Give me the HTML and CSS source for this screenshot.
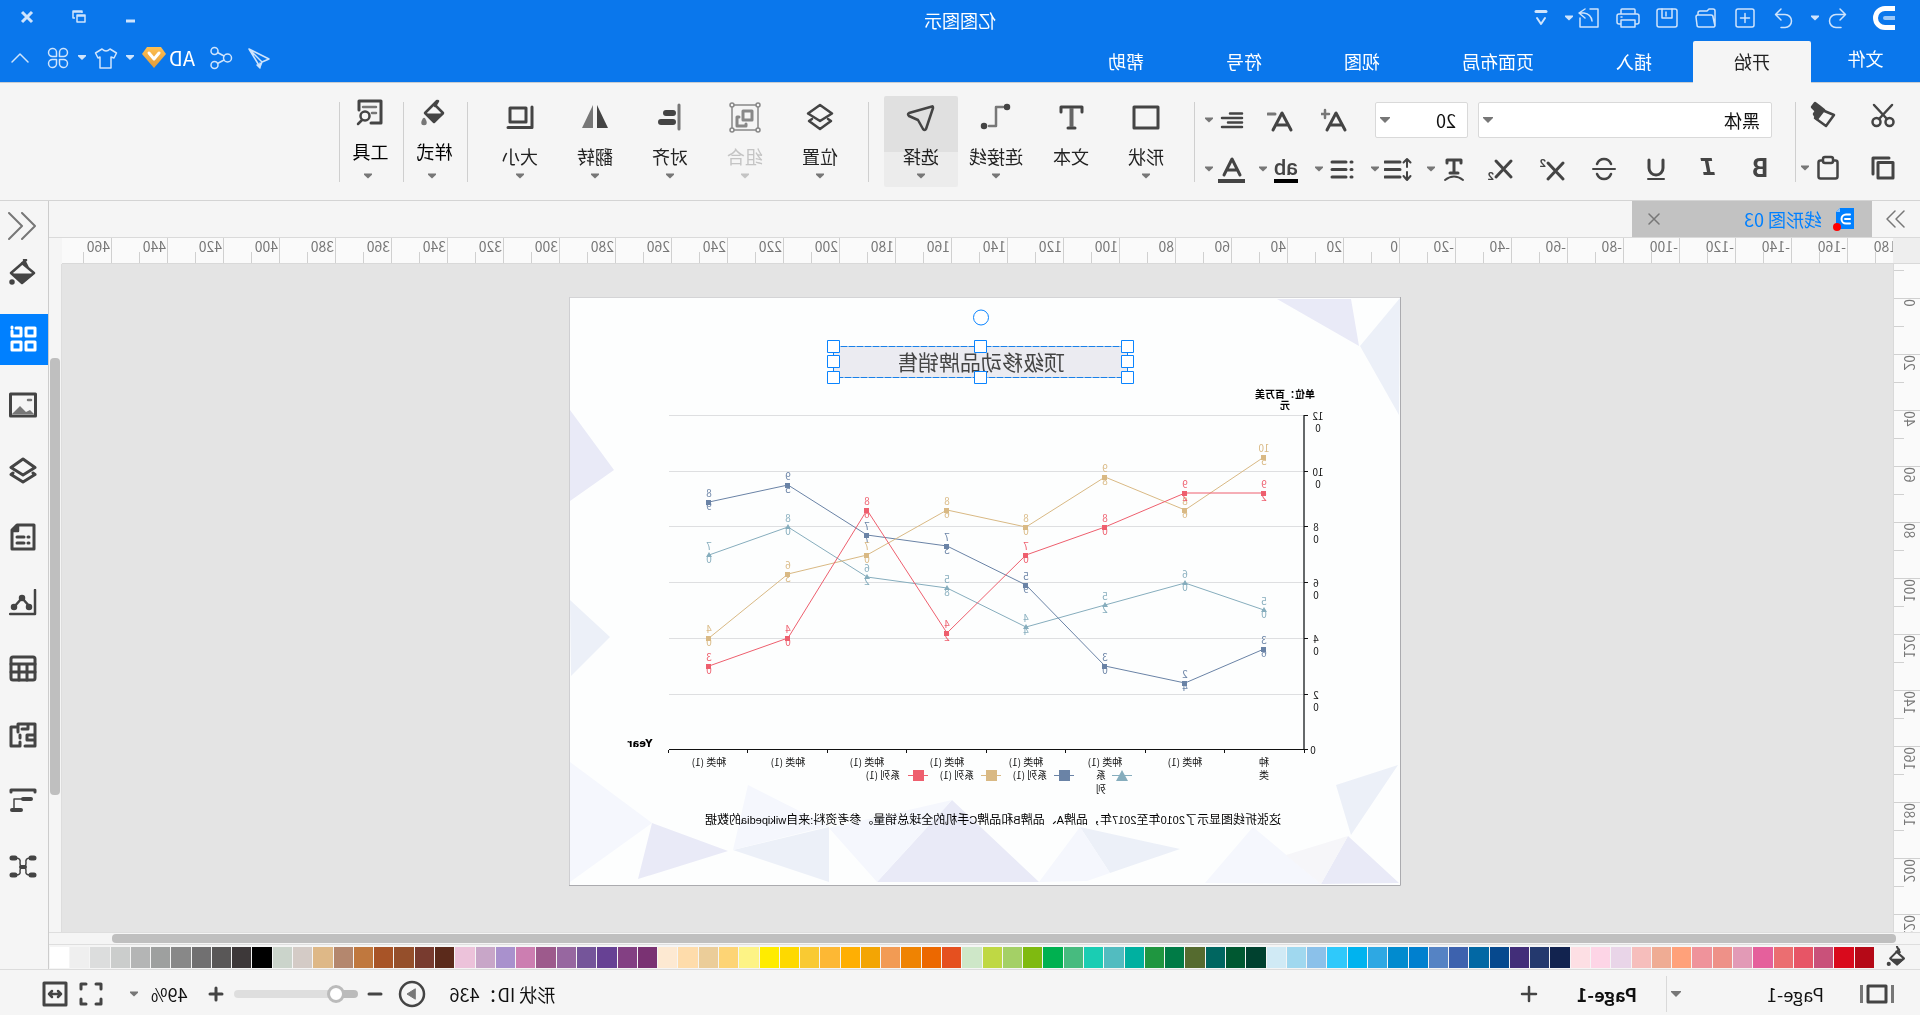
FILE: index.html
```html
<!DOCTYPE html>
<html lang="zh-CN">
<head>
<meta charset="utf-8">
<title>亿图图示</title>
<link rel="stylesheet" href="styles.css">
</head>
<body>
<div class="app">
  <header class="header">
    <div class="titlebar">
      <div class="quick">
        <svg class="logo" viewBox="0 0 22 24"><path d="M0 2.500H10a9.500 9.500 0 0 1 0 19H0" fill="none" stroke="#fff" stroke-width="5"/><path d="M0 12H10" stroke="#9cc8f7" stroke-width="4" stroke-linecap="round"/></svg>
        <button class="ib" aria-label="撤销"><svg viewBox="0 0 24 24"><path d="M9 3 3.500 8.500 9 14M4 8.500h9a6.500 6.500 0 0 1 0 13H8"/></svg></button>
        <button class="caret light" aria-label="撤销列表"></button>
        <button class="ib" aria-label="恢复"><svg viewBox="0 0 24 24"><path d="M15 3l5.500 5.500L15 14M20 8.500h-9a6.500 6.500 0 0 0 0 13h4"/></svg></button>
        <button class="ib" aria-label="新建"><svg viewBox="0 0 24 24"><rect x="3" y="3" width="18" height="18" rx="2"/><path d="M12 7.500v9M7.500 12h9"/></svg></button>
        <button class="ib" aria-label="打开"><svg viewBox="0 0 24 24"><path d="M3 20V5q0-2 2-2h4l2 2h7q2 0 2 2v2M3 20l1 1h15q2 0 2-2l1-8q0-2-2-2H7q-2 0-2 2z"/></svg></button>
        <button class="ib" aria-label="保存"><svg viewBox="0 0 24 24"><rect x="2" y="3" width="20" height="18" rx="2"/><path d="M7 3v9h10V3M13 6v4"/></svg></button>
        <button class="ib" aria-label="打印"><svg viewBox="0 0 24 24"><path d="M5 8V4q0-1 1-1h12q1 0 1 1v4M5 18H3q-2 0-2-2v-6q0-2 2-2h18q2 0 2 2v6q0 2-2 2h-2M5 14h14v7H5zM18 11h1"/></svg></button>
        <button class="ib" aria-label="导出"><svg viewBox="0 0 24 24"><path d="M11 3H3v18h18v-9M16 3l6 4-6 5M22 7h-5q-7 1-8 8"/></svg></button>
        <button class="caret light tight" aria-label="导出列表"></button>
        <button class="ib" aria-label="自定义"><svg viewBox="0 0 24 24"><path d="M7 5.500h10" stroke-width="3"/><path d="M8 12l4 6 4-6" stroke-width="2"/></svg></button>
      </div>
      <h1 class="title">亿图图示</h1>
      <div class="winctl">
        <button aria-label="最小化"><svg viewBox="0 0 16 16"><path d="M4 12h9" stroke-width="3"/></svg></button>
        <button aria-label="还原"><svg viewBox="0 0 16 16"><path d="M5 4V2h9v7h-2M2 6h8v7H2zM2 7h8M5 3h9" stroke-width="1.500"/></svg></button>
        <button aria-label="关闭"><svg viewBox="0 0 16 16"><path d="M3 3l10 10M13 3 3 13" stroke-width="3"/></svg></button>
      </div>
    </div>
    <div class="tabbar">
      <nav class="tabs">
        <a href="#file" class="file">文件</a><a href="#home" class="on">开始</a><a href="#insert">插入</a><a href="#layout">页面布局</a><a href="#view">视图</a><a href="#symbol">符号</a><a href="#help">帮助</a>
      </nav>
      <div class="tools">
        <button class="ib" aria-label="发送"><svg viewBox="0 0 24 24"><path d="M22 3 2 13l7 3 2 5 11-18zM22 3 9 16M11 17v5l3-3"/></svg></button>
        <button class="ib" aria-label="分享"><svg viewBox="0 0 24 24"><circle cx="5.500" cy="12" r="4"/><circle cx="18.500" cy="5" r="3.500"/><circle cx="18.500" cy="19" r="3.500"/><path d="M9 10l6.500-3.500M9 14l6.500 3.500"/></svg></button>
        <button class="account"><span>AD</span><svg viewBox="0 0 24 24"><defs><linearGradient id="gem" x2="0" y2="1"><stop offset="0" stop-color="#ffc052"/><stop offset="1" stop-color="#e09b3c"/></linearGradient></defs><path d="M5 1h14l5 7-12 14L0 8z" fill="url(#gem)" stroke="none"/><path d="M7 7l5 6 5-6" stroke="#fff" stroke-width="3"/></svg></button>
        <button class="caret light" aria-label="账号"></button>
        <button class="ib" aria-label="主题"><svg viewBox="0 0 24 24"><path d="M8 3 1.500 7 4 12l3-1v11h11V11l2 1 2.500-5L16 3q-4 4-8 0z"/></svg></button>
        <button class="caret light" aria-label="主题列表"></button>
        <button class="ib" aria-label="应用"><svg viewBox="0 0 24 24"><path d="M10.500 10.500V7a4 4 0 1 0-4.500 3.500zM13.500 10.500V7a4 4 0 1 1 4.500 3.500zM10.500 13.500V17a4 4 0 1 1-4.500-3.500zM13.500 13.500V17a4 4 0 1 0 4.500-3.500z"/></svg></button>
        <button class="ib" aria-label="收起"><svg viewBox="0 0 24 24"><path d="M4 16l8-8 8 8"/></svg></button>
      </div>
    </div>
  </header>

  <section class="ribbon">
    <div class="clip">
      <div class="row">
        <button class="ic" aria-label="剪切"><svg viewBox="0 0 28 28"><circle cx="7.500" cy="21" r="4"/><circle cx="20.500" cy="21" r="4"/><path d="M5 4l13 14M23 4 10 18"/></svg></button>
        <button class="ic" aria-label="格式刷"><svg viewBox="0 0 28 28"><path d="M3 14l12-5 7 8-11 8z"/><path d="M13 9l7 9 3-5-2-3 4-4-3-4-4 3z" class="f"/></svg></button>
      </div>
      <div class="row">
        <button class="ic" aria-label="复制"><svg viewBox="0 0 28 28"><path d="M4 8.500h15V24H4zM8 4h16v16" stroke-width="3"/></svg></button>
        <div class="split"><button class="ic" aria-label="粘贴"><svg viewBox="0 0 28 28"><rect x="4.500" y="6.500" width="19" height="18" rx="2"/><rect x="9" y="3" width="10" height="6" rx="2" class="bg"/></svg></button><button class="caret" aria-label="粘贴选项"></button></div>
      </div>
    </div>
    <i class="sep"></i>
    <div class="font">
      <div class="row top">
        <select class="family" aria-label="字体"><option>黑体</option></select>
        <select class="size" aria-label="字号"><option>20</option></select>
        <button class="ic" aria-label="增大字号"><svg viewBox="0 0 28 28"><path d="M4 24 13 7l9 17M7 19h12" stroke-width="3"/><path d="M20 8h8M24 4v8" stroke="#777"/></svg></button>
        <button class="ic" aria-label="减小字号"><svg viewBox="0 0 28 28"><path d="M4 24 13 7l9 17M7 19h12" stroke-width="3"/><path d="M20 8h7" stroke="#777" stroke-width="3"/></svg></button>
        <div class="split"><button class="ic" aria-label="对齐"><svg viewBox="0 0 28 28"><path d="M4 7.500h12M4 12h20M4 16.500h14M4 21h20"/></svg></button><button class="caret" aria-label="对齐选项"></button></div>
      </div>
      <div class="row low">
        <button class="ic" aria-label="加粗"><b class="rb">B</b></button>
        <button class="ic" aria-label="斜体"><i class="mono">I</i></button>
        <button class="ic" aria-label="下划线"><svg viewBox="0 0 28 28"><path d="M7 5v8a7 7 0 0 0 14 0V5" stroke-width="3"/><path d="M6 24h16" stroke-width="2"/></svg></button>
        <button class="ic" aria-label="删除线"><svg viewBox="0 0 28 28"><path d="M21 9q-2-5-7-5t-7 5M7 19q2 5 7 5t7-5"/><path d="M3 14h22" stroke-width="2"/></svg></button>
        <button class="ic" aria-label="上标"><svg viewBox="0 0 28 28"><path d="M3 8l15 16M18 8 3 24" stroke-width="3"/><text x="20" y="12">2</text></svg></button>
        <button class="ic" aria-label="下标"><svg viewBox="0 0 28 28"><path d="M3 6l15 16M18 6 3 22" stroke-width="3"/><text x="20" y="25">2</text></svg></button>
        <div class="split first"><button class="ic" aria-label="文字效果"><svg viewBox="0 0 28 28"><path d="M7 8V5h14v3M14 5v13M10 18h8" stroke-width="3"/><path d="M5 25q9-7 18 0" stroke-width="2"/></svg></button><button class="caret" aria-label="更多"></button></div>
        <div class="split"><button class="ic" aria-label="行距"><svg viewBox="0 0 28 28"><path d="M12 7h15M12 14.500h15M12 22h15" stroke-width="3"/><path d="M5 4v8M1.500 7.500 5 4l3.500 3.500M5 17v8M1.500 21 5 25l3.500-4" stroke-width="2"/></svg></button><button class="caret" aria-label="更多"></button></div>
        <div class="split"><button class="ic" aria-label="项目符号"><svg viewBox="0 0 28 28"><path d="M10 7h14M10 14.500h14M10 22h14M4 7h1M4 14.500h1M4 22h1" stroke-width="3"/></svg></button><button class="caret" aria-label="更多"></button></div>
        <div class="split"><button class="ic" aria-label="突出显示"><span class="ab">ab</span></button><button class="caret" aria-label="更多"></button></div>
        <div class="split last"><button class="ic" aria-label="字体颜色"><svg viewBox="0 0 28 28"><path d="M6 20 14 4l8 16M9 15h10" stroke-width="3"/><path d="M1 26h27" stroke-width="4" stroke-linecap="butt"/></svg></button><button class="caret" aria-label="更多"></button></div>
      </div>
    </div>
    <i class="sep"></i>
    <div class="big">
      <button><svg viewBox="0 0 32 32"><rect x="4" y="6" width="24" height="21" stroke-width="3"/></svg><span>形状</span><i class="caret"></i></button>
      <button><svg viewBox="0 0 32 32"><path d="M5 11V6h21v5M12 27h7" stroke-width="3"/><path d="M15.500 7v19" stroke="#666" stroke-width="4" stroke-linecap="butt"/></svg><span>文本</span></button>
      <button><svg viewBox="0 0 32 32"><path d="M9 6h7v19h7" stroke="#777"/><circle cx="5" cy="6" r="2" class="f"/><circle cx="28" cy="25" r="2" class="f"/></svg><span>连接线</span><i class="caret"></i></button>
      <button class="on"><svg viewBox="0 0 32 32"><path d="M5 5.500 28 12q2 1 0 3l-9 4-5 9q-2 2-3 0L4 7q0-2 1-1.500z"/></svg><span>选择</span><i class="caret"></i></button>
    </div>
    <i class="sep"></i>
    <div class="big">
      <button><svg viewBox="0 0 32 32"><path d="M16 4l12 8.500L16 20 4 12.500zM8 18l-3 2 11 8 11-8-3-2"/></svg><span>位置</span><i class="caret"></i></button>
      <button disabled><svg viewBox="0 0 32 32"><path d="M3 4h26v25H3z" stroke-width="1.500"/><path d="M9 10h9v9H9zM22 16h2v9h-9v-2" stroke-width="3"/><g class="bg" stroke-width="1.500"><circle cx="3" cy="4" r="2"/><circle cx="29" cy="4" r="2"/><circle cx="3" cy="29" r="2"/><circle cx="29" cy="29" r="2"/></g></svg><span>组合</span><i class="caret"></i></button>
      <button><svg viewBox="0 0 32 32"><path d="M7 4v24" stroke="#777" stroke-width="3"/><path d="M13 12h7M13 21h12" stroke-width="6"/></svg><span>对齐</span><i class="caret"></i></button>
      <button><svg viewBox="0 0 32 32"><path d="M14 4v23H3z" fill="#444" stroke="none"/><path d="M18 4v23h11z" fill="#777" stroke="none"/></svg><span>翻转</span><i class="caret"></i></button>
      <button><svg viewBox="0 0 32 32"><path d="M10 7h16v14H10zM4 6v20.500h24" stroke-width="3"/></svg><span>大小</span><i class="caret"></i></button>
    </div>
    <i class="sep"></i>
    <div class="big slim">
      <button><svg viewBox="0 0 32 32"><path d="M13 5l12 12-9 9-9-9 9-9M12 5l3 5"/><path d="M7 18h18l-9 8z" class="f" stroke-width="1"/><path d="M26 23q3 5 0 5t0-5z" fill="#777" stroke="#777"/></svg><span>样式</span><i class="caret"></i></button>
    </div>
    <i class="sep"></i>
    <div class="big slim">
      <button><svg viewBox="0 0 32 32"><path d="M15 27H5V5h22v9" stroke-width="3"/><path d="M10 11h13M10 17h4" stroke="#777"/><circle cx="21" cy="20" r="4.500"/><path d="M24 24l4 4"/></svg><span>工具</span><i class="caret"></i></button>
    </div>
    <i class="sep"></i>
  </section>

  <div class="body">
    <main class="work">
      <div class="docs">
        <button class="expand" aria-label="展开左侧面板"><svg viewBox="0 0 24 24"><path d="M4 4l8 8-8 8M13 4l8 8-8 8"/></svg></button>
        <div class="doc">
          <svg class="docicon" viewBox="0 0 22 24"><path d="M1 1h14l4 4v17H1z" fill="#0080ff"/><path d="M15 1v4h4z" fill="#8cc4ff"/><path d="M5 7.500h4a4 4 0 0 1 0 9H5M5 12h5" fill="none" stroke="#fff" stroke-width="2"/><circle cx="18" cy="20" r="4" fill="#f00"/></svg>
          <span>线形图 03</span>
          <button aria-label="关闭标签"><svg viewBox="0 0 12 12"><path d="M1 1l10 10M11 1 1 11"/></svg></button>
        </div>
      </div>
      <div class="hruler"><div class="track"><span>-180</span><span>-160</span><span>-140</span><span>-120</span><span>-100</span><span>-80</span><span>-60</span><span>-40</span><span>-20</span><span>0</span><span>20</span><span>40</span><span>60</span><span>80</span><span>100</span><span>120</span><span>140</span><span>160</span><span>180</span><span>200</span><span>220</span><span>240</span><span>260</span><span>280</span><span>300</span><span>320</span><span>340</span><span>360</span><span>380</span><span>400</span><span>420</span><span>440</span><span>460</span></div></div>
      <div class="stage">
        <div class="vruler"><div class="track"><span></span><span><b>0</b></span><span><b>20</b></span><span><b>40</b></span><span><b>60</b></span><span><b>80</b></span><span><b>100</b></span><span><b>120</b></span><span><b>140</b></span><span><b>160</b></span><span><b>180</b></span><span><b>200</b></span><span><b>220</b></span></div></div>
        <div class="canvas">
          <svg class="page" width="832" height="589" viewBox="-1 0 832 589">
            <rect x="-1" width="832" height="589" fill="#fdfefe"/>
            <g fill="#e9eaf7"><path d="M830 113l-44 60 44 31zM123 2H49l-8 47zM52 539l27 48-78-1zM448 503l75 82H361zM748 526l-76 28 90 28z"/></g>
            <g fill="#ecf0f8"><path d="M830 303l-40 37 39 39zM0 1l40 48L1 118zM64 488L2 468l47 70zM320 530l-100 22 70 24zM667 553l-96-23v55z"/></g>
            <g fill="#f5f7fd"><path d="M147 530l48 56-116 1zM320 530l-30 46 23 8 48 1zM448 503l123 28-48 54zM652 488l-81 41 96 24zM830 465l-82 61 82 59z"/></g>
            <path d="M52 539l62 19-35 29z" fill="#f6f6f9"/>
            <g fill="none"><path d="M831 .5H-1" stroke="#d4d4d6"/><path d="M830.500 0v588" stroke="#cfcfd2"/><path d="M-.5 0v588.500H831" stroke="#ababaf"/></g>
            <rect x="272.500" y="49.500" width="294" height="31" fill="#ebebf1" stroke="#1a80e8" stroke-dasharray="7 1"/>
            <text x="419" y="73" class="heading">顶级移动品牌销售</text>
            <g class="handles"><circle cx="419" cy="20.500" r="7.500"/><path d="M266.500 43.500h12v12h-12zM413.500 43.500h12v12h-12zM560.500 43.500h12v12h-12zM266.500 58.500h12v12h-12zM560.500 58.500h12v12h-12zM266.500 74.500h12v12h-12zM413.500 74.500h12v12h-12zM560.500 74.500h12v12h-12z"/></g>
            <path d="M96 118.500h635M96 174.500h635M96 229.500h635M96 285.500h635M96 341.500h635M96 397.500h635" stroke="#dedfe1"/>
            <path d="M96 118v334" stroke="#66696b" stroke-width="2"/>
            <path d="M92 118.500h4M92 174.500h4M92 229.500h4M92 285.500h4M92 341.500h4M92 397.500h4M92 452.500h639M95.500 453v3M175.500 453v3M254.500 453v3M334.500 453v3M413.500 453v3M493.500 453v3M572.500 453v3M652.500 453v3M731.500 453v3" stroke="#111"/>
            <g class="strong"><text x="115" y="101">单位：百万美</text><text x="115" y="112">元</text><text x="760" y="450" class="year">Year</text></g>
            <g class="axis">
              <text x="82" y="123">12</text><text x="82" y="135">0</text><text x="82" y="179">10</text><text x="82" y="191">0</text>
              <text x="84" y="234">8</text><text x="84" y="246">0</text><text x="84" y="290">6</text><text x="84" y="302">0</text><text x="84" y="346">4</text><text x="84" y="358">0</text><text x="84" y="402">2</text><text x="84" y="414">0</text><text x="87" y="457">0</text>
              <text x="136" y="469">种</text><text x="136" y="482">类</text><text x="215" y="469">种类 (1)</text><text x="295" y="469">种类 (1)</text><text x="374" y="469">种类 (1)</text><text x="453" y="469">种类 (1)</text><text x="533" y="469">种类 (1)</text><text x="612" y="469">种类 (1)</text><text x="691" y="469">种类 (1)</text>
              <text x="299" y="482">系</text><text x="299" y="496">列</text><text x="370" y="482">系列 (1)</text><text x="443" y="482">系列 (1)</text><text x="517" y="482">系列 (1)</text>
            </g>
            <g class="teal"><path d="M268 478.500h20"/><path class="m" d="M278 473l6 11h-12z"/></g>
            <g class="blue"><path d="M326 478.500h20"/><path class="m" d="M330 473h11v11h-11z"/></g>
            <g class="tan"><path d="M399 478.500h20"/><path class="m" d="M403 473h11v11h-11z"/></g>
            <g class="red"><path d="M472 478.500h20"/><path class="m" d="M476 473h11v11h-11z"/></g>
            <g id="series"></g>
            <text x="119" y="527" class="note">这张折线图显示了<tspan>2010</tspan>年至<tspan>2017</tspan>年，品牌<tspan>A</tspan>、品牌<tspan>B</tspan>和品牌<tspan>C</tspan>手机的全球总销量。参考资料<tspan>:</tspan>来自<tspan>wikipedia</tspan>的数据</text>
          </svg>
        </div>
        <div class="vscroll"><i></i></div>
      </div>
      <div class="hscroll"><i></i></div>
      <div class="palette">
        <button class="ic" aria-label="填充"><svg viewBox="0 0 32 32"><path d="M13 5l13 13-10 9-10-9L17 8M16 1l-4 8"/><path d="M6 19h20l-10 8z" class="f" stroke-width="1"/><circle cx="28" cy="26" r="1.500" class="f"/></svg></button>
        <div class="swatches" id="swatches"></div>
      </div>
    </main>
    <aside class="side">
      <button class="fold" aria-label="展开面板"><svg viewBox="0 0 28 28"><path d="M14 1 1 14l13 13M27 1 14 14l13 13"/></svg></button>
      <button aria-label="填充"><svg viewBox="0 0 28 28"><path d="M11 1l15 13-11 10-12-10L15 4M13 1 9 9"/><path d="M4 15h21l-10 9z" class="f" stroke-width="1"/><circle cx="25" cy="23" r="1.500" class="f"/></svg></button>
      <button class="on" aria-label="符号库"><svg viewBox="0 0 28 28"><path d="M2 3h9v8H2zM2 17h9v8H2zM16 17h9v8h-9zM25 6v5h-9V3h5M25 2v1" stroke-width="3"/></svg></button>
      <button aria-label="图片"><svg viewBox="0 0 28 28"><rect x="1.500" y="3" width="25" height="22" stroke-width="3"/><path d="M3 23l4-4 4 2 6-6 6 6 2 2z" fill="#777" stroke="none"/><path d="M6 9h3" stroke="#777"/></svg></button>
      <button aria-label="图层"><svg viewBox="0 0 28 28"><path d="M14 2l12 8.500L14 18 2 10.500zM4 16l-2 1.500L14 25l12-7.500-2-1.500" stroke-width="3"/></svg></button>
      <button aria-label="注释"><svg viewBox="0 0 28 28"><path d="M3 2h17l5 5v19H3z" stroke-width="3"/><path d="M19 3v5h5z" class="f"/><path d="M8 14h1M13 14h7M8 20h1M13 20h7" stroke-width="3"/></svg></button>
      <button aria-label="图表"><svg viewBox="0 0 28 28"><path d="M2 1v24h25M7 18l8-9 8 9"/><g class="f"><circle cx="8" cy="18" r="2"/><circle cx="15" cy="9" r="2"/><circle cx="23" cy="18" r="2"/></g></svg></button>
      <button aria-label="表格"><svg viewBox="0 0 28 28"><rect x="2" y="2" width="24" height="23" rx="2" stroke-width="3"/><path d="M2 9h24M2 17h24M10 9v16M18 9v16" stroke-width="3"/></svg></button>
      <button aria-label="平面图"><svg viewBox="0 0 28 28"><path d="M2 3h17v3h7v19H17M12 25H2V3M9 3v5h6M2 14h8v5H2M19 6v5M17 14v3M17 25v-4" stroke-width="3"/></svg></button>
      <button aria-label="甘特图"><svg viewBox="0 0 28 28"><path d="M2 5V3h24v2" stroke-width="3"/><path d="M6 12h8M16 23h9" stroke-width="4"/><path d="M14 12h9v9" stroke-width="1.500"/></svg></button>
      <button aria-label="思维导图"><svg viewBox="0 0 28 28"><path d="M3 5h3M3 22h3M22 5h3M22 22h3" stroke-width="5"/><path d="M12 14h4" stroke-width="4"/><path d="M7 5q5 0 4 5 0 4 3 4 3 0 3-4-1-5 4-5M7 22q5 0 4-4 0-4 3-4 3 0 3 4-1 4 4 4" stroke-width="1.500"/></svg></button>
    </aside>
  </div>

  <footer class="status">
    <button class="pageicon" aria-label="页面列表"><svg viewBox="0 0 34 20"><path d="M1.500 1v18M32.500 1v18" stroke="#777" stroke-width="3"/><rect x="8" y="2" width="18" height="16" stroke-width="3"/></svg></button>
    <select class="pages" aria-label="页面"><option>Page-1</option></select>
    <i class="vline"></i>
    <a href="#page1" class="current">Page-1</a>
    <button class="ic" aria-label="添加页面"><svg viewBox="0 0 28 28"><path d="M14 7v14M7 14h14"/></svg></button>
    <div class="right">
      <span class="shape">形状 ID：436</span>
      <button class="ic play" aria-label="演示"><svg viewBox="0 0 28 28"><circle cx="14" cy="14" r="12"/><path d="M11 9l8 5-8 5z" fill="#777" stroke="#777" stroke-width="1"/></svg></button>
      <button class="ic" aria-label="缩小"><svg viewBox="0 0 28 28"><path d="M8 14h12" stroke-width="3"/></svg></button>
      <input type="range" min="0" max="100" value="12" aria-label="缩放">
      <button class="ic" aria-label="放大"><svg viewBox="0 0 28 28"><path d="M14 8v12M8 14h12" stroke-width="3"/></svg></button>
      <span class="zoom">49%</span>
      <button class="caret" aria-label="缩放比例"></button>
      <button class="ic full" aria-label="全屏"><svg viewBox="0 0 28 28"><path d="M4 9V4h5M19 4h5v5M24 19v5h-5M9 24H4v-5" stroke-width="3"/></svg></button>
      <button class="ic" aria-label="适合窗口"><svg viewBox="0 0 28 28"><rect x="3" y="3" width="22" height="22" stroke-width="3"/><path d="M8 14h12M11 11l-3 3 3 3M17 11l3 3-3 3"/></svg></button>
    </div>
  </footer>
</div>
<script src="app.js"></script>
</body>
</html>
```
FILE: styles.css
```css
* { box-sizing: border-box; }
html, body { height: 100%; margin: 0; }
body { font: 18px/24px "Noto Sans CJK SC", sans-serif; color: #222; background: #f5f5f5; overflow: hidden; }

/* The whole window is shown mirrored. */
.app { display: flex; flex-direction: column; height: 100vh; transform: scaleX(-1); }

button { font: inherit; color: inherit; background: none; border: 0; padding: 0; margin: 0; display: block; flex: none; }
a { color: inherit; text-decoration: none; }
select { font: inherit; color: #111; appearance: none; border: 1px solid #d9d9d9; border-radius: 2px; background: #fff url("data:image/svg+xml,%3Csvg xmlns='http://www.w3.org/2000/svg' width='10' height='6'%3E%3Cpath d='M0 0h10v1L5 6 0 1z' fill='%23777'/%3E%3C/svg%3E") no-repeat right 4px center; }
svg { display: block; fill: none; stroke: #444; stroke-width: 2.5; stroke-linecap: round; stroke-linejoin: round; }
.f { fill: #444; }
.bg { fill: #f5f5f5; }
.caret { display: block; width: 10px; height: 16px; background: #777; clip-path: polygon(10% 34%, 90% 34%, 90% 42%, 50% 66%, 10% 42%); }
.caret.light { background: #cfe4fc; }

/* Header */
.header { background: #0a77ec; color: #fff; border-bottom: 1px solid #c9cdd2; flex: none; }
.header svg { stroke: #cfe4fc; stroke-width: 1.5; }
.titlebar { display: grid; grid-template-columns: 1fr auto 1fr; height: 41px; align-items: center; }
.quick { display: flex; align-items: center; gap: 15px; padding: 0 0 5px 25px; }
.logo { width: 22px; height: 24px; stroke-linecap: butt; margin-right: 9px; }
.quick .caret { margin: 0 -1px 0 -10px; }
.quick .caret.tight { margin: 0 -4px 0 -12px; }
.ib { width: 24px; height: 24px; }
.title { font-size: 18px; font-weight: 400; margin: 0 0 2px; }
.winctl { display: flex; justify-content: flex-end; padding: 0 1px 8px 0; }
.winctl button { width: 52px; display: flex; justify-content: center; }
.winctl svg { width: 16px; height: 16px; stroke-linecap: butt; }
.tabbar { display: flex; justify-content: space-between; height: 41px; }
.tabs { display: flex; }
.tabs a { padding: 0 41px; line-height: 40px; }
.tabs .file { padding: 0; width: 109px; text-align: center; line-height: 34px; }
.tabs .on { background: #f5f5f5; color: #222; border-radius: 2px 2px 0 0; margin-bottom: -1px; }
.tools { display: flex; align-items: center; gap: 14px; padding: 0 8px 8px 0; }
.tools .caret { margin: 0 -7px; }
.account { display: flex; align-items: center; gap: 3px; font-size: 20px; }
.account svg { width: 24px; height: 24px; }

/* Ribbon */
.ribbon { display: flex; height: 118px; border-bottom: 1px solid #d4d4d4; padding-top: 13px; flex: none; }
.sep { flex: none; width: 1px; height: 80px; margin-top: 6px; background: #cfcfcf; }
.row, .split { display: flex; align-items: center; }
.split { gap: 4px; }
.ic { width: 28px; height: 28px; display: grid; place-items: center; }
.ic svg { width: 28px; height: 28px; }
.ic text { font: bold 11px Roboto, sans-serif; fill: #444; stroke: none; }
.clip { width: 124px; padding: 5px 0 0 23px; display: flex; flex-direction: column; gap: 25px; }
.clip .row { gap: 27px; }
.clip .row:first-child { gap: 32px; }
.font { width: 600px; padding: 6px 0 0 21px; display: flex; flex-direction: column; gap: 17px; }
.font .top { padding-left: 2px; gap: 26px; }
.font .top select { height: 36px; padding: 0 11px; }
.family { width: 294px; margin-right: -16px; }
.size { width: 93px; }
.font .top .split { margin-left: -5px; }
.font .low { gap: 14px; }
.font .low > .ic { margin-right: 10px; }
.font .low > .first { margin-left: -6px; }
.font .low > .last { margin-left: -2px; }
.rb { font: bold 25px/28px Roboto, sans-serif; color: #444; }
.mono { font: italic bold 25px/28px "Liberation Mono", monospace; color: #444; }
.ab { font: 500 22px/22px Roboto, sans-serif; color: #444; border-bottom: 4px solid #000; margin-top: 2px; }
.big { display: flex; gap: 1px; padding: 0 15px 0 11px; }
.big button { width: 74px; height: 91px; padding-top: 5px; display: flex; flex-direction: column; align-items: center; border-radius: 2px; }
.big svg { width: 32px; height: 32px; margin-bottom: 11px; }
.big .on { background: linear-gradient(#e0e0e0 56px, #ececec 56px); }
.big button:disabled { color: #c4c4c4; }
.big button:disabled svg { stroke: #888; }
.big button:disabled .caret { background: #c4c4c4; }
.big.slim { padding: 0; width: 63px; }
.big.slim button { width: 63px; padding: 0 0 0 2px; color: #000; }
.big.slim .caret { margin: 5px 0 0 5px; }

/* Work area */
.body { flex: 1; display: flex; min-height: 0; }
.work { flex: 1; min-width: 0; display: flex; flex-direction: column; }
.docs { display: flex; height: 37px; border-bottom: 1px solid #dadada; flex: none; }
.expand { width: 48px; display: grid; place-items: center; }
.expand svg { width: 24px; height: 24px; stroke: #777; stroke-width: 1.5; }
.doc { width: 240px; background: #c2c2c2; color: #0080ff; display: flex; align-items: center; padding: 0 16px 0 17px; }
.docicon { width: 22px; height: 24px; stroke: none; margin-right: 11px; }
.doc button { margin-left: auto; }
.doc button svg { width: 12px; height: 12px; stroke: #777; stroke-width: 1.5; }
.hruler { height: 26px; padding-left: 27px; margin-right: 13px; background: #eee; border-bottom: 1px solid #d9d9d9; flex: none; }
.hruler .track { display: flex; height: 25px; overflow: hidden; background: #fafafa; }
.hruler span { flex: none; width: 56px; padding-left: 1px; border-left: 1px solid #d0d0d0; background: linear-gradient(#d0d0d0, #d0d0d0) 27px bottom / 1px 11px no-repeat; font-size: 14px; line-height: 16px; color: #777; }
.hruler span:first-child { margin-left: -11px; }
.stage { flex: 1; display: flex; min-height: 0; }
.vruler { width: 27px; overflow: hidden; background: #fafafa; border-right: 1px solid #d9d9d9; flex: none; }
.vruler .track { margin-top: -22px; height: 100%; }
.vruler span { display: block; height: 56px; padding-left: 1px; border-top: 1px solid #d0d0d0; background: linear-gradient(#d0d0d0, #d0d0d0) right 27px / 10px 1px no-repeat; }
.vruler b { display: block; writing-mode: vertical-rl; transform: rotate(180deg); width: 18px; text-align: right; font-size: 14px; font-weight: 400; line-height: 18px; color: #777; }
.canvas { flex: 1; min-width: 0; overflow: hidden; background: #e4e4e4; padding: 33px 0 0 492px; }
.page { stroke-width: 1; stroke-linecap: butt; stroke-linejoin: miter; stroke: none; }
.vscroll { width: 13px; flex: none; padding: 94px 1px 0; border-left: 1px solid #ddd; }
.vscroll i { display: block; height: 437px; border-radius: 4px; background: #bfbfbf; }
.hscroll { height: 13px; flex: none; border: solid #dedede; border-width: 1px 0; padding: 1px 63px 1px 24px; }
.hscroll i { display: block; height: 9px; border-radius: 4px; background: #bfbfbf; }
.palette { display: flex; align-items: center; height: 24px; flex: none; }
.palette .ic { width: 46px; height: 22px; }
.palette .ic svg { width: 22px; height: 22px; stroke-width: 3; }
.swatches { flex: 1; display: flex; gap: 1px; height: 21px; }
.swatches i { flex: 1; }

/* Chart */
.page text { font-family: "Noto Sans CJK SC", sans-serif; text-anchor: middle; }
.heading { font-size: 21px; fill: #444; }
.handles { fill: #fff; stroke: #0a84ff; }
.strong { font-size: 10px; font-weight: 700; fill: #000; }
.page .year { font-family: "DejaVu Sans", sans-serif; }
.axis { font-size: 10px; fill: #111; }
.page .note { font-size: 12px; fill: #000; text-anchor: start; }
.note tspan { font: 11px "Liberation Sans", sans-serif; }
.teal { --c: #86adbd; } .blue { --c: #6a83a6; } .tan { --c: #d9b984; } .red { --c: #ee5f6e; }
.teal path, .blue path, .tan path, .red path { stroke: var(--c); fill: none; }
.page .m { fill: var(--c); stroke: none; }
.page .value { font-size: 10px; fill: var(--c); }

/* Side panel */
.side { width: 49px; flex: none; border-left: 1px solid #ccc; display: flex; flex-direction: column; gap: 15px; }
.side button { height: 51px; display: grid; place-items: center; padding: 0 0 1px 2px; }
.side svg { width: 28px; height: 28px; }
.side .fold { height: 47px; margin: 2px 0 -17px; padding: 0 0 2px 4px; }
.side .fold svg { stroke: #777; stroke-width: 2; }
.side .on { background: #0080ff; }
.side .on svg { stroke: #fff; }

/* Status bar */
.status { height: 46px; flex: none; border-top: 1px solid #dcdcdc; display: flex; align-items: center; color: #111; padding: 3px 41px 0 26px; }
.pageicon svg { width: 34px; height: 20px; stroke-linecap: butt; }
.pages { width: 193px; height: 36px; border: 0; padding: 0 36px; background-color: transparent; }
.vline { width: 1px; height: 36px; background: #d9d9d9; margin-right: 29px; }
.current { font-weight: 700; margin-right: 34px; }
.right { margin-left: auto; display: flex; align-items: center; }
.right .play { margin: 0 9px 0 24px; }
.right .full { margin: 0 8px 0 24px; }
.zoom { margin: 0 12px 0 14px; }
input[type="range"] { appearance: none; width: 124px; height: 18px; margin: 0 4px 0 3px; background: none; }
input[type="range"]::-webkit-slider-runnable-track { height: 8px; border-radius: 4px; background: linear-gradient(90deg, #bbb 16%, #dedede 16%); }
input[type="range"]::-webkit-slider-thumb { appearance: none; width: 18px; height: 18px; margin-top: -5px; border: 3px solid #bbb; border-radius: 50%; background: #fff; }
```
FILE: app.js
```js
const NS = "http://www.w3.org/2000/svg";
const series = {
  teal: [50, 60, 52, 44, 58, 62, 80, 70],
  blue: [36, 24, 30, 59, 73, 77, 95, 89],
  tan: [105, 86, 98, 80, 86, 70, 63, 40],
  red: [92, 92, 80, 70, 42, 86, 40, 30],
};

function add(parent, name, attrs, text) {
  const el = document.createElementNS(NS, name);
  for (const key in attrs) el.setAttribute(key, attrs[key]);
  if (text) el.textContent = text;
  parent.appendChild(el);
  return el;
}

for (const name in series) {
  const group = add(document.getElementById("series"), "g", { class: name });
  const points = series[name].map((v, i) => [Math.round(136 + 79.35 * i), Math.round(452.5 - v * 2.783)]);
  add(group, "path", { d: "M" + points.map(p => p.join(" ")).join("L") });
  points.forEach(([x, y], i) => {
    const value = String(series[name][i]);
    const shape = name === "teal" ? `M${x} ${y - 3}l3 5h-6z` : `M${x - 2} ${y - 2}h5v5h-5z`;
    add(group, "path", { class: "m", d: shape });
    add(group, "text", { class: "value", x, y: y - 5 }, value.slice(0, -1));
    add(group, "text", { class: "value", x, y: y + 8 }, value.slice(-1));
  });
}

const colors = "b50917 d90a1c c9517a e75566 eb6e71 e5609c e29ab6 ee9188 ef939b ffa17a efac94 f6bebc e9d5e8 fdd5e6 fddfe4 12234f 24396e 422e79 06498e 0268a4 3d62ae 5583c4 0080cf 018bcf 2ea8e3 00b3ef 2fc9fb 8bc1ea a0d8ef d0eaf5 00412f 005831 006660 556b2f 007b46 1f9640 00b0a0 52bcc0 1acdb3 47bb7f 00b150 7fba10 a4d066 bfd844 cee7c8 e5501f ec6800 ef8302 f29b54 f3a504 ffaf03 fdb834 f9ca33 fed900 ffec00 fdf385 fdd475 ebcd99 fedcab fde9d2 7a3273 834083 674194 75559a 9767a0 9d5a8c cc7eb1 a991cd c8a6c8 ecc2da 5b2a1b 783b2f 954f2b a85427 c0783e b4876e deb887 d4cbc6 cbd4cb 000000 3d3839 595757 717071 888888 9ea09f b4b5b5 cbcdcc dcdddd efefef ffffff";
for (const color of colors.split(" ")) {
  const swatch = document.createElement("i");
  swatch.style.background = "#" + color;
  document.getElementById("swatches").appendChild(swatch);
}
```
